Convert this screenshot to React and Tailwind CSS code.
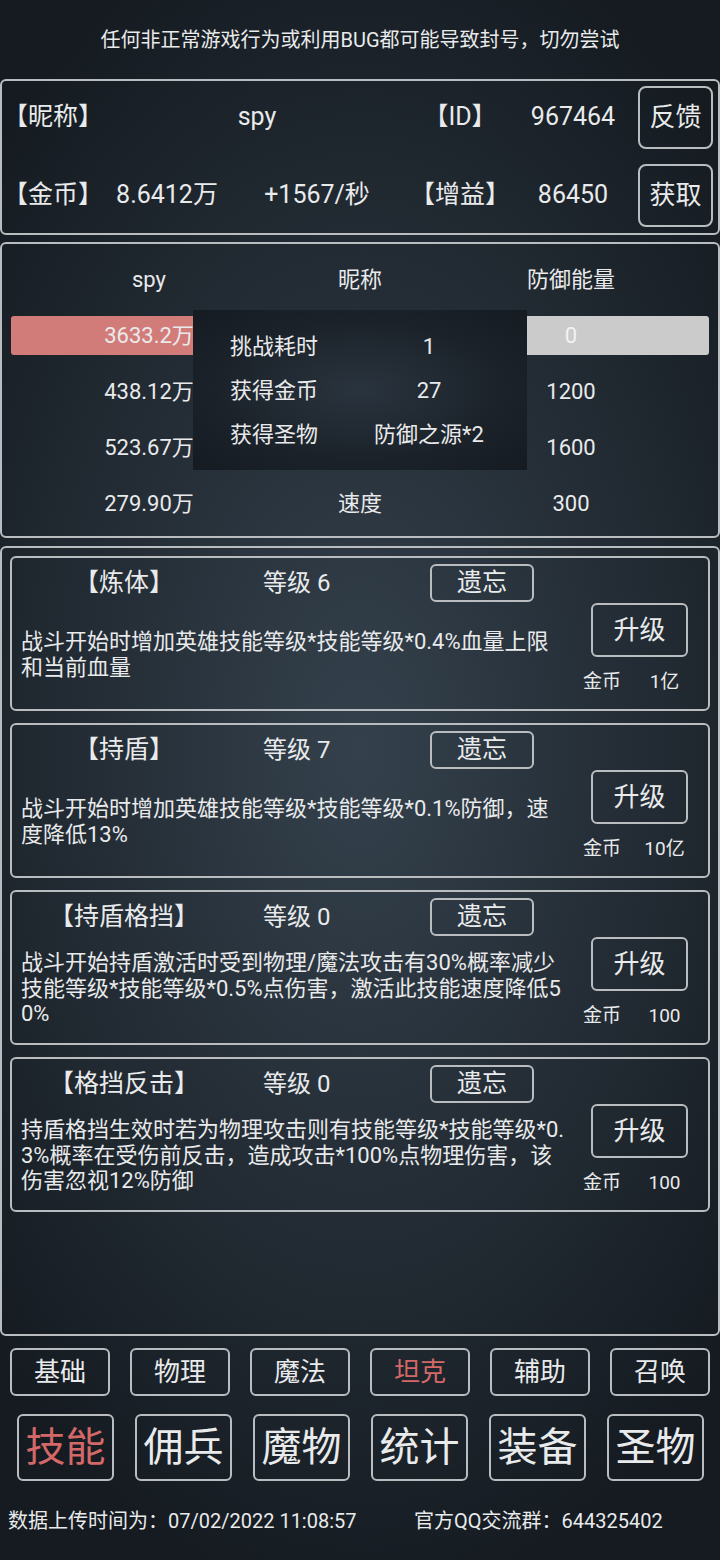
const skills = [
  {
    name: "【炼体】",
    level: 6,
    desc: "战斗开始时增加英雄技能等级*技能等级*0.4%血量上限和当前血量",
    cost: "1亿",
  },
  {
    name: "【持盾】",
    level: 7,
    desc: "战斗开始时增加英雄技能等级*技能等级*0.1%防御，速度降低13%",
    cost: "10亿",
  },
  {
    name: "【持盾格挡】",
    level: 0,
    desc: "战斗开始持盾激活时受到物理/魔法攻击有30%概率减少技能等级*技能等级*0.5%点伤害，激活此技能速度降低50%",
    cost: "100",
  },
  {
    name: "【格挡反击】",
    level: 0,
    desc: "持盾格挡生效时若为物理攻击则有技能等级*技能等级*0.3%概率在受伤前反击，造成攻击*100%点物理伤害，该伤害忽视12%防御",
    cost: "100",
  },
];

const tabs = ["基础", "物理", "魔法", "坦克", "辅助", "召唤"];
const menus = ["技能", "佣兵", "魔物", "统计", "装备", "圣物"];

const statRows = [
  ["438.12万", "", "1200"],
  ["523.67万", "", "1600"],
  ["279.90万", "速度", "300"],
];

function SkillCard({ skill }) {
  return (
    <div className="h-[155px] shrink-0 rounded-md border-2 border-[#b9bdc0] flex flex-col">
      {/* title row */}
      <div className="h-[44px] flex items-start pt-[6px]">
        <div className="w-[224px] shrink-0 h-[38px] flex items-center justify-center text-[25px] whitespace-nowrap">
          {skill.name}
        </div>
        <div className="w-[194px] shrink-0 h-[38px] flex items-center pl-[27px] text-[24px] whitespace-nowrap">
          等级 {skill.level}
        </div>
        <div className="w-[104px] h-[38px] rounded-md border-2 border-[#b9bdc0] flex items-center justify-center text-[25px]">
          遗忘
        </div>
      </div>
      {/* body */}
      <div className="flex-1 flex">
        <div className="w-[559px] shrink-0 pl-[9px] pr-[3px] flex items-center pb-[2px]">
          <p className="text-[22px] leading-[25.5px] break-all">{skill.desc}</p>
        </div>
        <div className="flex-1 flex flex-col items-center">
          <div className="w-[97px] h-[54px] mt-[1px] rounded-md border-2 border-[#b9bdc0] flex items-center justify-center text-[26px]">
            升级
          </div>
          <div className="w-full flex items-center h-[24px] mt-[13px] text-[19px]">
            <span className="pl-[12px]">金币</span>
            <span className="flex-1 text-center">{skill.cost}</span>
          </div>
        </div>
      </div>
    </div>
  );
}

export default function App() {
  return (
    <div className="w-[720px] h-[1560px] overflow-hidden text-[#e9eaeb] font-['Roboto','Noto_Sans_CJK_SC',sans-serif] bg-[radial-gradient(ellipse_70%_55%_at_50%_48%,#34414c_0%,#252e37_50%,#151b21_100%)]">
      {/* warning */}
      <div className="h-[79px] flex items-center justify-center text-[20px]">
        任何非正常游戏行为或利用BUG都可能导致封号，切勿尝试
      </div>

      {/* player info */}
      <div className="h-[156px] rounded-md border-2 border-[#b9bdc0] flex flex-col gap-[6px] text-[25px]">
        <div className="h-[72px] flex items-center pr-[5px] whitespace-nowrap">
          <span className="w-[102px] shrink-0 text-center">【昵称】</span>
          <span className="w-[306px] shrink-0 text-center">spy</span>
          <span className="w-[100px] shrink-0 text-center">【ID】</span>
          <span className="w-[126px] shrink-0 text-center">967464</span>
          <div className="ml-auto w-[75px] h-[63px] rounded-lg border-2 border-[#b9bdc0] flex items-center justify-center text-[26px]">
            反馈
          </div>
        </div>
        <div className="h-[72px] flex items-center pr-[5px] whitespace-nowrap">
          <span className="w-[102px] shrink-0 text-center">【金币】</span>
          <span className="w-[126px] shrink-0 text-center">8.6412万</span>
          <span className="w-[174px] shrink-0 text-center">+1567/秒</span>
          <span className="w-[112px] shrink-0 text-center">【增益】</span>
          <span className="w-[114px] shrink-0 text-center">86450</span>
          <div className="ml-auto w-[75px] h-[63px] rounded-lg border-2 border-[#b9bdc0] flex items-center justify-center text-[26px]">
            获取
          </div>
        </div>
      </div>

      {/* battle stats */}
      <div className="relative mt-[7px] h-[296px] rounded-md border-2 border-[#b9bdc0] px-[9px] pt-[7px] text-[22px]">
        <div className="grid grid-cols-[276px_146px_276px] h-[56px] items-center text-center">
          <span>spy</span>
          <span>昵称</span>
          <span>防御能量</span>
        </div>
        <div className="grid grid-cols-[276px_146px_276px] h-[56px] items-center text-center">
          <div className="h-[39px] flex items-center justify-center bg-[#d27c7a] rounded-l-[3px]">3633.2万</div>
          <div className="h-[39px] bg-[linear-gradient(to_right,#d27c7a_50%,#cbcbcb_50%)]"></div>
          <div className="h-[39px] flex items-center justify-center bg-[#cbcbcb] rounded-r-[3px] text-[#f2f2f2]">0</div>
        </div>
        {statRows.map((r, i) => (
          <div key={i} className="grid grid-cols-[276px_146px_276px] h-[56px] items-center text-center">
            <span>{r[0]}</span>
            <span>{r[1]}</span>
            <span>{r[2]}</span>
          </div>
        ))}

        {/* result popup */}
        <div className="absolute left-[191px] top-[66px] w-[334px] h-[160px] bg-[radial-gradient(ellipse_at_center,#2a343e_0%,#1b222a_60%,#151b21_100%)] flex flex-col justify-center gap-[8px] text-[22px]">
          {[
            ["挑战耗时", "1"],
            ["获得金币", "27"],
            ["获得圣物", "防御之源*2"],
          ].map(([k, v]) => (
            <div key={k} className="flex items-center h-[36px]">
              <span className="pl-[37px] w-[180px]">{k}</span>
              <span className="w-[112px] text-center whitespace-nowrap">{v}</span>
            </div>
          ))}
        </div>
      </div>

      {/* skills */}
      <div className="mt-[8px] h-[790px] rounded-md border-2 border-[#b9bdc0] px-[8px] pt-[8px] flex flex-col gap-[12px]">
        {skills.map((s) => (
          <SkillCard key={s.name} skill={s} />
        ))}
      </div>

      {/* category tabs */}
      <div className="mt-[12px] flex gap-[20px] px-[10px]">
        {tabs.map((t) => (
          <div
            key={t}
            className={
              "w-[100px] h-[48px] rounded-md border-2 border-[#b9bdc0] flex items-center justify-center text-[26px] " +
              (t === "坦克" ? "text-[#d46868]" : "")
            }
          >
            {t}
          </div>
        ))}
      </div>

      {/* main menu */}
      <div className="mt-[18px] flex gap-[21px] pl-[17px]">
        {menus.map((m) => (
          <div
            key={m}
            className={
              "w-[97px] h-[67px] rounded-md border-2 border-[#b9bdc0] flex items-center justify-center text-[40px] " +
              (m === "技能" ? "text-[#d46868]" : "")
            }
          >
            {m}
          </div>
        ))}
      </div>

      {/* footer */}
      <div className="mt-[26px] h-[28px] flex items-center text-[20px] whitespace-nowrap">
        <span className="pl-[8px] w-[414px]">数据上传时间为：07/02/2022 11:08:57</span>
        <span>官方QQ交流群：644325402</span>
      </div>
    </div>
  );
}
